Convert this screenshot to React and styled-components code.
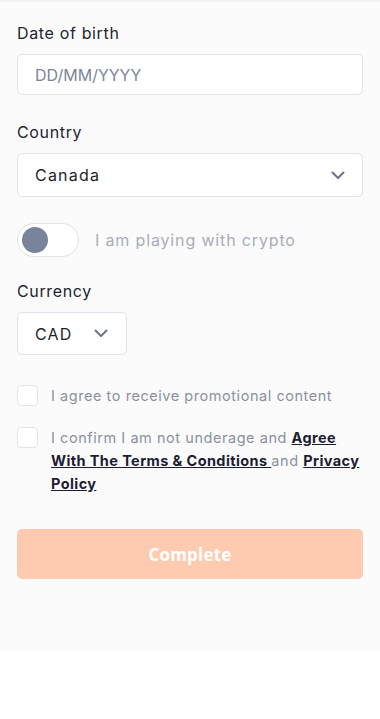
import React from "react";
import styled, { createGlobalStyle } from "styled-components";

const Global = createGlobalStyle`
  html, body { margin: 0; padding: 0; background: #ffffff; }
  body { font-family: Inter, "Noto Sans", sans-serif; }
  * { box-sizing: border-box; }
`;

const Page = styled.div`
  width: 380px;
  min-height: 719px;
  background: #ffffff;
`;

const Form = styled.form`
  background: #fbfbfc;
  border-top: 2px solid #f3f3f5;
  padding: 20px 17px 72px 17px;
  display: flex;
  flex-direction: column;
`;

const Field = styled.div`
  display: flex;
  flex-direction: column;
  margin-bottom: ${(p) => p.$mb || 0}px;
`;

const Label = styled.label`
  font-size: 16px;
  line-height: 22px;
  color: #23232f;
  margin-bottom: 10px;
  letter-spacing: 0.65px;
`;

const Box = styled.div`
  height: ${(p) => p.$h || 43}px;
  width: ${(p) => p.$w || "100%"};
  background: #ffffff;
  border: 1px solid #e2e2ec;
  border-radius: 5px;
  display: flex;
  align-items: center;
  justify-content: space-between;
  padding: 0 ${(p) => p.$pr || 17}px 0 17px;
  font-size: 16px;
  color: ${(p) => (p.$placeholder ? "#7d8597" : "#1e1e2c")};
  letter-spacing: ${(p) => (p.$placeholder ? "0px" : "1.2px")};
`;

const ToggleRow = styled.div`
  display: flex;
  align-items: center;
  gap: 16px;
  margin: 26px 0 23px;
`;

const Track = styled.div`
  width: 62px;
  height: 34px;
  border-radius: 17px;
  border: 1px solid #e3e3ec;
  background: #ffffff;
  display: flex;
  align-items: center;
  padding-left: 4px;
`;

const Knob = styled.div`
  width: 26px;
  height: 26px;
  border-radius: 50%;
  background: #78849b;
`;

const ToggleText = styled.span`
  font-size: 16px;
  color: #a9adb7;
  letter-spacing: 0.85px;
`;

const CheckRow = styled.div`
  display: flex;
  align-items: flex-start;
  gap: 13px;
  margin-top: ${(p) => p.$mt || 0}px;
`;

const Check = styled.span`
  flex: 0 0 21px;
  width: 21px;
  height: 21px;
  border: 1px solid #e3e3ec;
  border-radius: 4px;
  background: #ffffff;
  margin-top: 1px;
`;

const CheckText = styled.p`
  margin: 0;
  font-size: 14.5px;
  line-height: 23px;
  color: #8a90a0;
  letter-spacing: 0.55px;
`;

const Link = styled.a`
  color: #1c1c33;
  font-weight: 700;
  text-decoration: underline;
  letter-spacing: 0.4px;
`;

const Button = styled.button`
  margin-top: 34px;
  height: 50px;
  width: 100%;
  border: none;
  border-radius: 5px;
  background: #ffcbb0;
  color: #ffffff;
  font-family: "Open Sans", sans-serif;
  font-weight: 700;
  font-size: 17px;
  letter-spacing: 0.2px;
`;

const Chevron = () => (
  <svg width="14" height="9" viewBox="0 0 14 9" fill="none">
    <path d="M1.5 1.5 L7 7 L12.5 1.5" stroke="#6b7388" strokeWidth="2" strokeLinecap="round" strokeLinejoin="round" />
  </svg>
);

export default function App() {
  return (
    <Page>
      <Global />
      <Form onSubmit={(e) => e.preventDefault()}>
        <Field $mb={26}>
          <Label>Date of birth</Label>
          <Box $h={41} $placeholder>DD/MM/YYYY</Box>
        </Field>
        <Field>
          <Label>Country</Label>
          <Box $h={44} $pr={17}>
            <span>Canada</span>
            <Chevron />
          </Box>
        </Field>
        <ToggleRow>
          <Track>
            <Knob />
          </Track>
          <ToggleText>I am playing with crypto</ToggleText>
        </ToggleRow>
        <Field>
          <Label>Currency</Label>
          <Box $h={43} $w="110px" $pr={18}>
            <span>CAD</span>
            <Chevron />
          </Box>
        </Field>
        <CheckRow $mt={29}>
          <Check />
          <CheckText>I agree to receive promotional content</CheckText>
        </CheckRow>
        <CheckRow $mt={19}>
          <Check />
          <CheckText>
            I confirm I am not underage and <Link>Agree With The Terms &amp; Conditions </Link>and{" "}
            <Link>Privacy Policy</Link>
          </CheckText>
        </CheckRow>
        <Button type="submit">Complete</Button>
      </Form>
    </Page>
  );
}
